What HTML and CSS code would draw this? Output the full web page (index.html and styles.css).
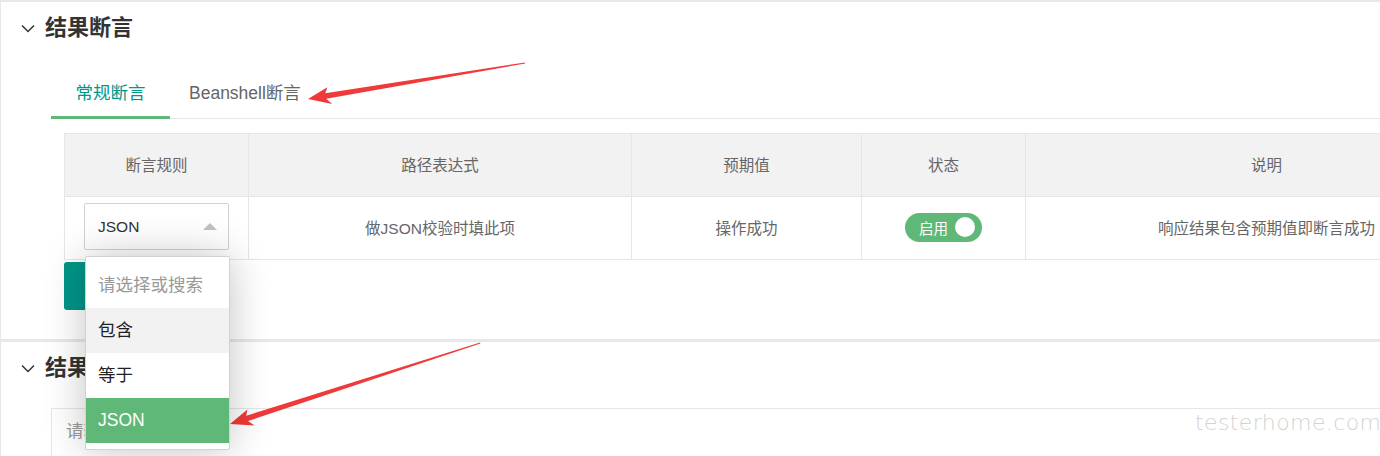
FILE: index.html
```html
<!DOCTYPE html>
<html lang="zh-CN">
<head>
  <meta charset="UTF-8" />
  <title>结果断言</title>
  <link rel="stylesheet" href="styles.css">
</head>
<body>
  <div class="page">
    <section class="card card-assert">
      <div class="card-head">
        <svg class="chev" width="14" height="9" viewBox="0 0 14 9"><polyline points="1,1.5 7,7.5 13,1.5" /></svg>
        <h2>结果断言</h2>
      </div>
      <div class="tabs">
        <ul class="tab-title">
          <li class="this">常规断言</li>
          <li>Beanshell断言</li>
        </ul>
        <div class="tab-body">
          <table class="rules">
            <colgroup>
              <col style="width:184px"><col style="width:383px"><col style="width:230px"><col style="width:164px"><col style="width:482px">
            </colgroup>
            <thead>
              <tr><th>断言规则</th><th>路径表达式</th><th>预期值</th><th>状态</th><th>说明</th></tr>
            </thead>
            <tbody>
              <tr>
                <td class="cell-select">
                  <div class="select">
                    <span>JSON</span>
                    <i class="caret"></i>
                    <dl class="select-menu">
                      <dd class="tip">请选择或搜索</dd>
                      <dd class="hover">包含</dd>
                      <dd>等于</dd>
                      <dd class="selected">JSON</dd>
                    </dl>
                  </div>
                </td>
                <td>做JSON校验时填此项</td>
                <td>操作成功</td>
                <td><span class="switch"><em>启用</em><i></i></span></td>
                <td>响应结果包含预期值即断言成功</td>
              </tr>
            </tbody>
          </table>
          <button class="btn">新增</button>
        </div>
      </div>
    </section>

    <section class="card">
      <div class="card-head">
        <svg class="chev" width="14" height="9" viewBox="0 0 14 9"><polyline points="1,1.5 7,7.5 13,1.5" /></svg>
        <h2>结果提取</h2>
      </div>
      <div class="area">
        <div class="textarea">请输入断言内容</div>
      </div>
    </section>
  </div>

  <svg class="marks" width="1380" height="456" viewBox="0 0 1380 456">
    <g transform="translate(308 99) rotate(-9.42)">
      <polygon points="0,0 21,-8.5 18,-2.8 220,-0.5 220,0.5 18,2.8 23,9" />
    </g>
    <g transform="translate(230 424) rotate(-17.95)">
      <polygon points="0,0 21,-8.5 18,-2.8 263,-0.5 263,0.5 18,2.8 23,9" />
    </g>
  </svg>

  <div class="watermark">testerhome.com</div>
</body>
</html>
```

FILE: styles.css
```css
* {
  box-sizing: border-box;
  margin: 0;
  padding: 0;
}

body {
  width: 1380px;
  height: 456px;
  overflow: hidden;
  background: #e8e8e8;
  font-family: 'Liberation Sans', 'Noto Sans CJK SC', sans-serif;
  color: #333;
}

.page {
  padding-top: 2px;
  width: 1700px;
}

.card {
  background: #fff;
  margin-left: 1px;
}

.card-assert {
  height: 337px;
  margin-bottom: 3px;
}

.card-head {
  height: 52px;
  display: flex;
  align-items: center;
  gap: 10px;
  padding-left: 20px;
}

.chev polyline {
  fill: none;
  stroke: #333;
  stroke-width: 1.5;
}

.card-head h2 {
  font-size: 22px;
  font-weight: bold;
  color: #333;
  line-height: 1;
}

.tabs {
  margin: 14px 0 0 50px;
}

.tab-title {
  list-style: none;
  display: flex;
  height: 51px;
  border-bottom: 1px solid #e6e6e6;
}

.tab-title li {
  position: relative;
  min-width: 81px;
  box-sizing: content-box;
  padding: 0 19px;
  line-height: 50px;
  text-align: center;
  font-size: 17.5px;
  color: #666;
}

.tab-title li.this {
  color: #009688;
}

.tab-title li.this::after {
  content: "";
  position: absolute;
  left: 0;
  right: 0;
  bottom: -1px;
  height: 3px;
  background: #5fb878;
}

.tab-body {
  padding: 14px 0 0 13px;
}

.rules {
  table-layout: fixed;
  width: 1443px;
  border-collapse: collapse;
  font-size: 15.5px;
  color: #666;
}

.rules th,
.rules td {
  border: 1px solid #e6e6e6;
  height: 63px;
  text-align: center;
  font-weight: normal;
  padding: 0;
}

.rules th {
  background: #f2f2f2;
  padding-bottom: 3px;
}

.rules td {
  padding-bottom: 2px;
}

.rules td.cell-select {
  text-align: left;
  padding-left: 19px;
  padding-bottom: 3px;
}

.select {
  position: relative;
  width: 145px;
  height: 47px;
  border: 1px solid #d2d2d2;
  border-radius: 2px;
  background: #fff;
  display: flex;
  align-items: center;
  padding-left: 13px;
  color: #333;
}

.caret {
  position: absolute;
  right: 11px;
  top: 19px;
  border-left: 7.5px solid transparent;
  border-right: 7.5px solid transparent;
  border-bottom: 7.5px solid #c2c2c2;
}

.select-menu {
  position: absolute;
  z-index: 10;
  top: 52px;
  left: 0;
  width: 145px;
  padding: 6px 0;
  background: #fff;
  border: 1px solid #d2d2d2;
  border-radius: 2px;
  box-shadow: 0 0 40px rgba(0, 0, 0, 0.24);
}

.select-menu dd {
  height: 45px;
  line-height: 45px;
  padding-left: 12px;
  font-size: 17.5px;
  color: #222;
}

.select-menu dd.tip {
  color: #999;
}

.select-menu dd.hover {
  background: #f2f2f2;
}

.select-menu dd.selected {
  background: #5fb878;
  color: #fff;
}

.switch {
  display: inline-flex;
  align-items: center;
  justify-content: space-between;
  width: 77px;
  height: 29px;
  border-radius: 15px;
  background: #5fb878;
  padding: 0 7px 0 14px;
  vertical-align: middle;
}

.switch em {
  font-style: normal;
  font-size: 14.5px;
  color: #fff;
}

.switch i {
  width: 20px;
  height: 20px;
  border-radius: 50%;
  background: #fff;
}

.btn {
  display: block;
  margin-top: 2px;
  height: 48px;
  padding: 0 22px;
  border: none;
  border-radius: 3px;
  background: #009688;
  color: #fff;
  font-family: inherit;
  font-size: 17.5px;
}

.area {
  margin: 14px 0 0 50px;
}

.textarea {
  height: 120px;
  border: 1px solid #e6e6e6;
  padding: 8px 14px;
  font-size: 17.5px;
  color: #999;
}

.marks {
  position: absolute;
  left: 0;
  top: 0;
  pointer-events: none;
}

.marks polygon {
  fill: #f03a3a;
}

.watermark {
  position: absolute;
  left: 1195px;
  top: 410px;
  font-family: 'DejaVu Sans ExtraLight', 'DejaVu Sans', sans-serif;
  font-weight: 200;
  font-size: 22px;
  letter-spacing: 0.4px;
  color: #d2d2d2;
}
```
